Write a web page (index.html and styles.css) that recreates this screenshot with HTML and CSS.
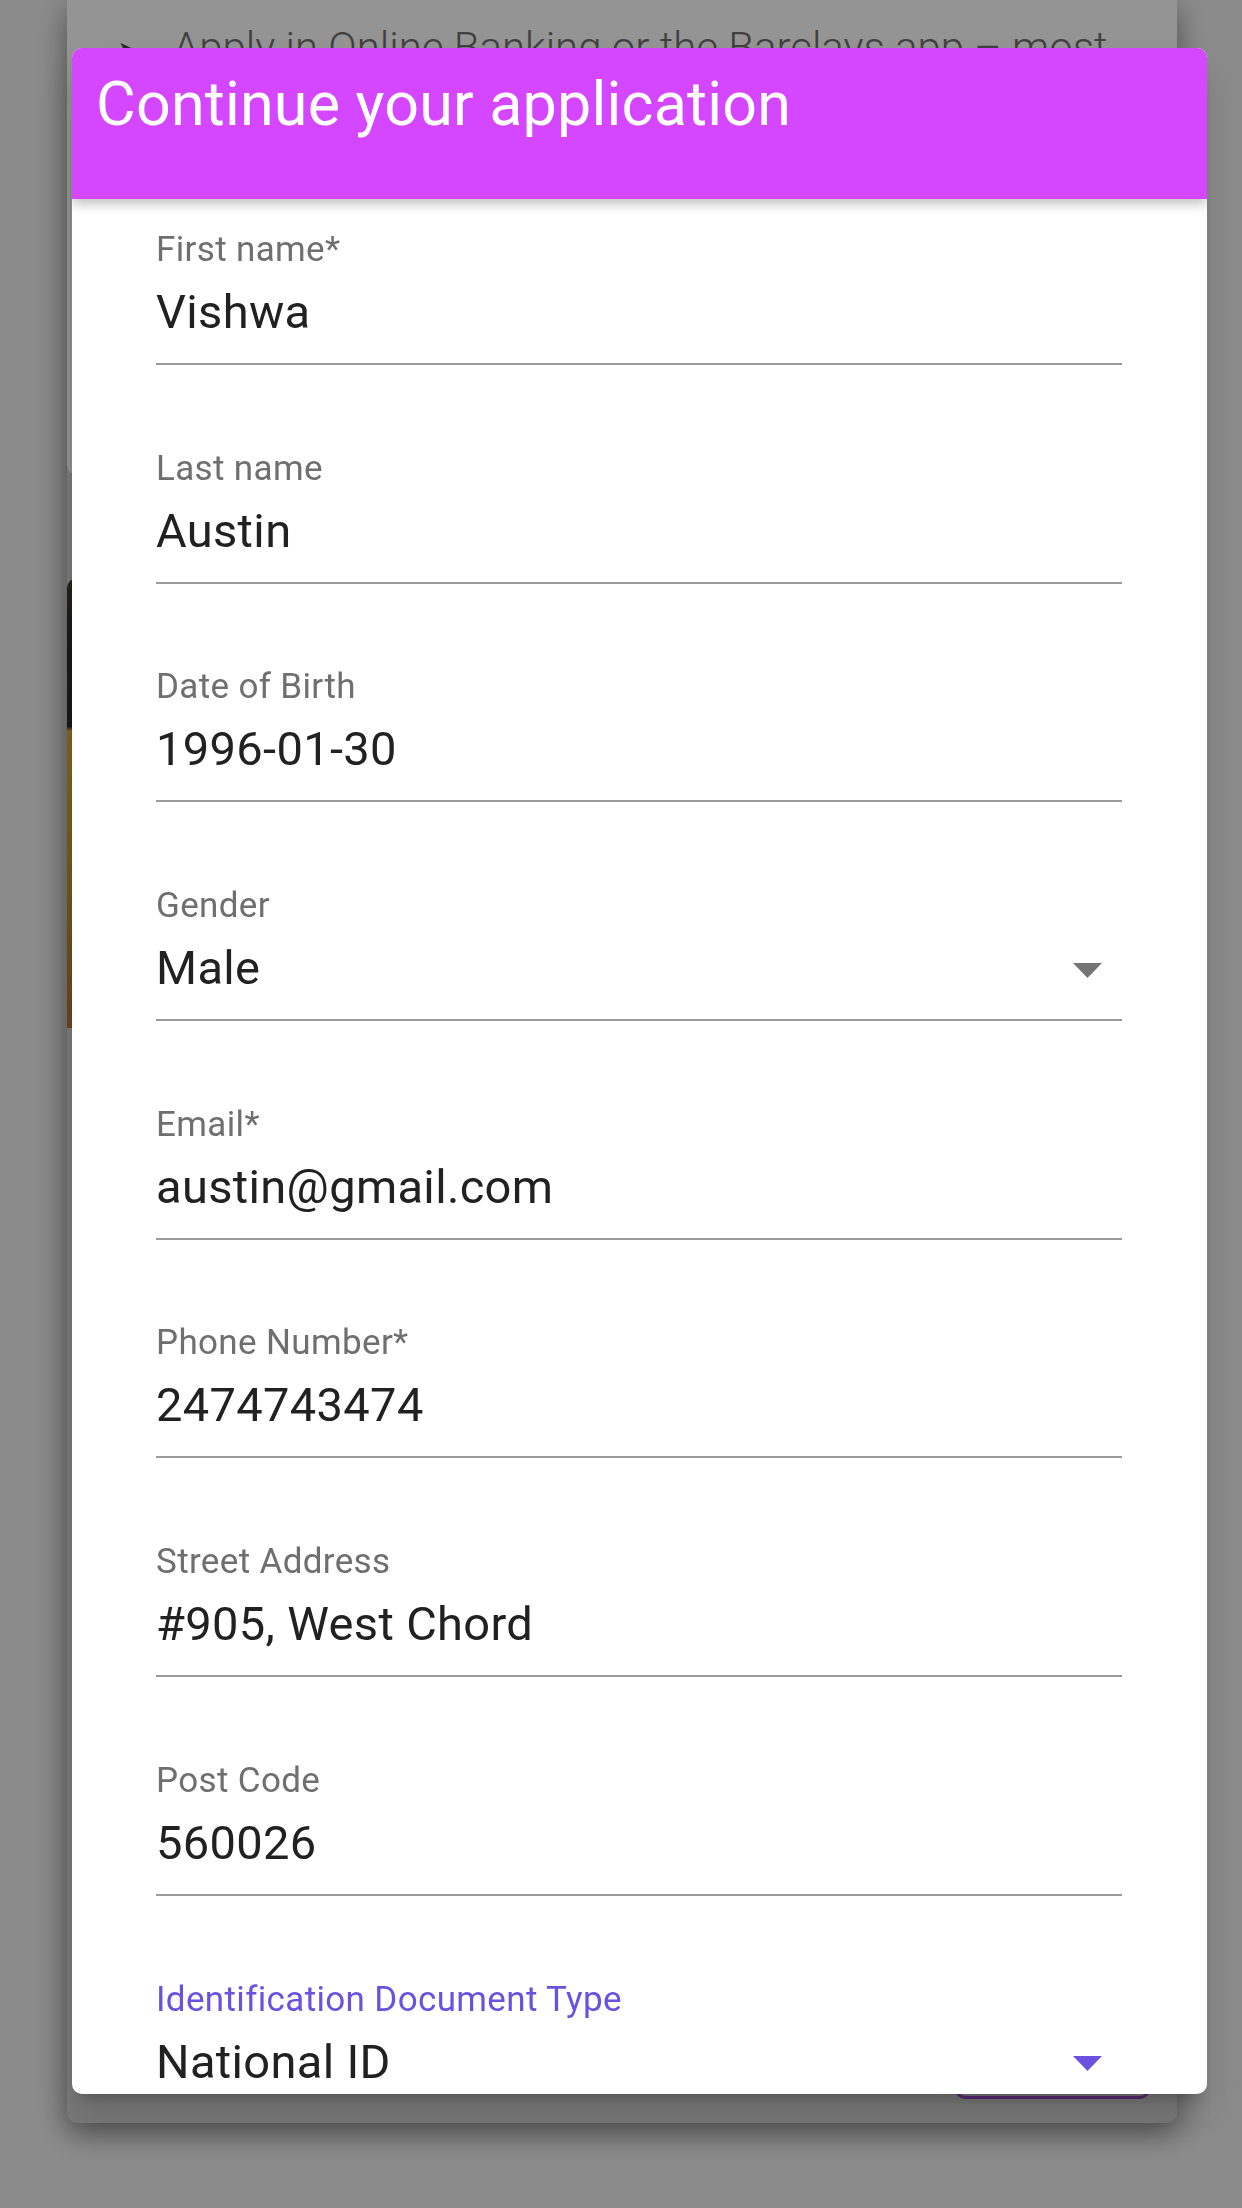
FILE: index.html
```html
<!DOCTYPE html>
<html lang="en">
<head>
  <meta charset="UTF-8">
  <meta name="viewport" content="width=device-width, initial-scale=1.0">
  <title>Continue your application</title>
  <link rel="stylesheet" href="styles.css">
</head>
<body>

  <div class="page">
    <div class="card">
      <div class="card-panel">
        <ul class="steps">
          <li><span class="step-mark">&#10148;</span>Apply in Online Banking or the Barclays app – most</li>
        </ul>
      </div>
      <div class="card-media"></div>
      <div class="card-actions">
        <button class="btn-outline" aria-label="Apply now"></button>
      </div>
    </div>
  </div>

  <div class="backdrop"></div>

  <div class="dialog" role="dialog" aria-labelledby="dialog-title">
    <div class="dialog-header">
      <h2 id="dialog-title">Continue your application</h2>
    </div>

    <form class="dialog-content">
      <div class="field">
        <label class="field-label">First name*</label>
        <div class="field-input">Vishwa</div>
      </div>
      <div class="field">
        <label class="field-label">Last name</label>
        <div class="field-input">Austin</div>
      </div>
      <div class="field">
        <label class="field-label">Date of Birth</label>
        <div class="field-input">1996-01-30</div>
      </div>
      <div class="field">
        <label class="field-label">Gender</label>
        <div class="field-input select">
          <span>Male</span>
          <svg class="arrow" width="29" height="15" viewBox="0 0 29 15"><path d="M0 0h29L14.5 15z"/></svg>
        </div>
      </div>
      <div class="field">
        <label class="field-label">Email*</label>
        <div class="field-input">austin@gmail.com</div>
      </div>
      <div class="field">
        <label class="field-label">Phone Number*</label>
        <div class="field-input">2474743474</div>
      </div>
      <div class="field">
        <label class="field-label">Street Address</label>
        <div class="field-input">#905, West Chord</div>
      </div>
      <div class="field">
        <label class="field-label">Post Code</label>
        <div class="field-input">560026</div>
      </div>
      <div class="field focused">
        <label class="field-label">Identification Document Type</label>
        <div class="field-input select">
          <span>National ID</span>
          <svg class="arrow" width="29" height="15" viewBox="0 0 29 15"><path d="M0 0h29L14.5 15z"/></svg>
        </div>
      </div>
    </form>
  </div>

</body>
</html>
```

FILE: styles.css
```css
* {
  box-sizing: border-box;
}

body {
  margin: 0;
  width: 1242px;
  height: 2208px;
  overflow: hidden;
  font-family: Roboto, "Liberation Sans", sans-serif;
  background-color: #f0f0f0;
}

/* page behind the dialog */
.page {
  padding: 0 65px 0 67px;
}

.card {
  display: flex;
  flex-direction: column;
  height: 2123px;
  background-color: #d4d4d4;
  border-radius: 0 0 10px 10px;
  box-shadow: 0 10px 30px rgba(0,0,0,0.45);
}

.card-panel {
  height: 475px;
  background-color: #fff;
  border-radius: 0 0 10px 10px;
  padding-top: 20px;
}

.steps {
  list-style: none;
  margin: 0;
  padding: 0 0 0 50px;
}

.steps li {
  font-size: 42px;
  font-weight: 300;
  line-height: 56px;
  color: #6e6e6e;
  white-space: nowrap;
}

.step-mark {
  display: inline-block;
  width: 56px;
  font-family: "DejaVu Sans", sans-serif;
  font-size: 30px;
  color: #4a4a4a;
}

.card-media {
  height: 450px;
  margin-top: 103px;
  border-radius: 10px 10px 0 0;
  background: linear-gradient(to bottom, #4a3a2c 0, #303030 10%, #2a2a2a 33%, #e2ad38 34%, #d19a33 60%, #b77537 100%);
}

.card-actions {
  margin-top: auto;
  display: flex;
  justify-content: flex-end;
  padding: 0 27px 24px 0;
}

.btn-outline {
  width: 195px;
  height: 70px;
  border: 3px solid #a048cf;
  border-radius: 10px;
  background: transparent;
}

.backdrop {
  position: fixed;
  inset: 0;
  background-color: rgba(0,0,0,0.42);
}

/* dialog */
.dialog {
  position: fixed;
  left: 72px;
  top: 48px;
  width: 1135px;
  height: 2046px;
  display: flex;
  flex-direction: column;
  background-color: #fff;
  border-radius: 10px;
  overflow: hidden;
  box-shadow: 0 11px 15px -7px rgba(0,0,0,0.2), 0 24px 38px 3px rgba(0,0,0,0.14);
}

.dialog-header {
  position: relative;
  z-index: 1;
  padding: 20px 24px 59px;
  background-color: #d446ff;
  box-shadow: 0 4px 12px rgba(0,0,0,0.28);
}

.dialog-header h2 {
  margin: 0;
  font-size: 61px;
  font-weight: 400;
  line-height: 72px;
  letter-spacing: 0.2px;
  color: #fff;
}

.dialog-content {
  flex: 1;
  overflow: hidden;
  padding: 31px 85px 0 84px;
}

.field {
  margin-bottom: 83.7px;
}

.field-label {
  display: block;
  font-size: 35px;
  line-height: 40px;
  letter-spacing: 0.35px;
  color: #6f6f6f;
}

.field-input {
  margin-top: 14px;
  padding-bottom: 23px;
  border-bottom: 2px solid #9b9b9b;
  font-size: 47px;
  line-height: 56px;
  letter-spacing: 0.35px;
  color: #212121;
}

.select {
  display: flex;
  justify-content: space-between;
  align-items: center;
}

.arrow {
  margin: 4px 20px 0 0;
  fill: #757575;
}

.focused .field-label {
  color: #6a52df;
}

.focused .arrow {
  fill: #6a52df;
}
```
